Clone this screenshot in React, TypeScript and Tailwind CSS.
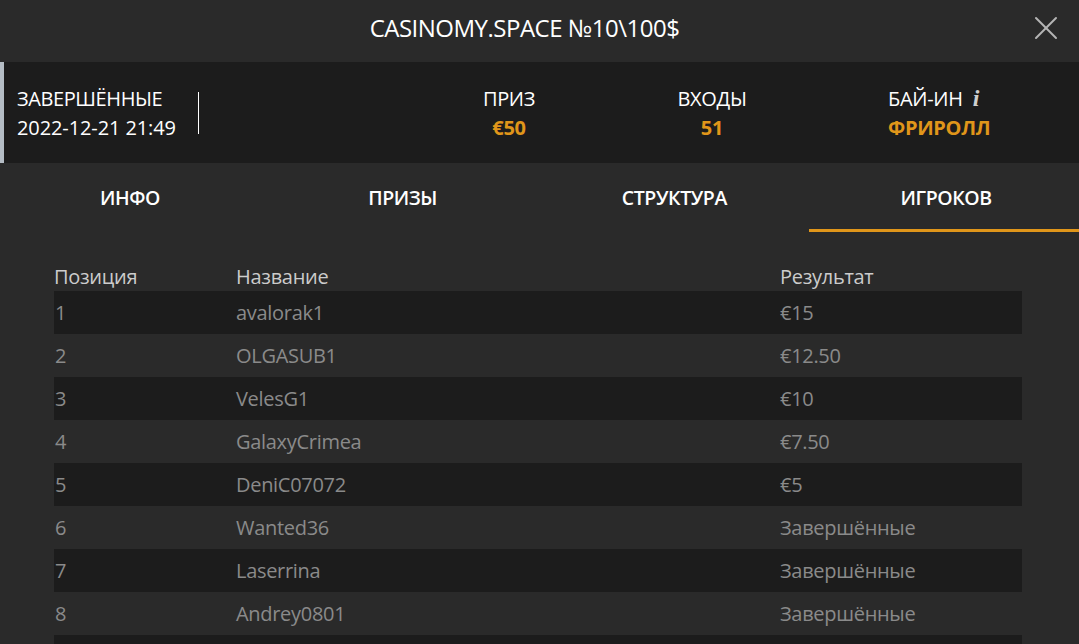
import { X } from "lucide-react";

const tabs = ["ИНФО", "ПРИЗЫ", "СТРУКТУРА", "ИГРОКОВ"];

const players = [
  { pos: 1, name: "avalorak1", result: "€15" },
  { pos: 2, name: "OLGASUB1", result: "€12.50" },
  { pos: 3, name: "VelesG1", result: "€10" },
  { pos: 4, name: "GalaxyCrimea", result: "€7.50" },
  { pos: 5, name: "DeniC07072", result: "€5" },
  { pos: 6, name: "Wanted36", result: "Завершённые" },
  { pos: 7, name: "Laserrina", result: "Завершённые" },
  { pos: 8, name: "Andrey0801", result: "Завершённые" },
  { pos: 9, name: "", result: "" },
];

export default function App() {
  return (
    <div
      className="h-[644px] w-[1079px] overflow-hidden bg-[#2a2a2a] text-white"
      style={{ fontFamily: '"Open Sans", "Noto Sans", sans-serif' }}
    >
      {/* title bar */}
      <div className="relative flex h-[62px] items-center justify-center pb-[6px] pr-[30px]">
        <h1 className="text-[24px] tracking-[-0.5px]">CASINOMY.SPACE №10\100$</h1>
        <button className="absolute right-[13px] top-[8px] text-[#b5b5b5]">
          <X className="h-[40px] w-[40px]" strokeWidth={1.2} />
        </button>
      </div>

      {/* summary */}
      <div className="flex h-[101px] items-center border-l-4 border-[#b4bcc4] bg-[#1c1c1c]">
        <div className="w-[194px] pl-[13px] text-[20px] leading-[29px] tracking-[-0.4px]">
          <div>ЗАВЕРШЁННЫЕ</div>
          <div className="tracking-[-0.1px]">2022-12-21 21:49</div>
        </div>
        <div className="h-[42px] w-px bg-white" />
        <div className="flex text-[20px] leading-[29px] tracking-[-0.3px]">
          <div className="ml-[210px] w-[200px] text-center">
            <div>ПРИЗ</div>
            <div className="font-bold text-[#e0961a]">€50</div>
          </div>
          <div className="ml-[3px] w-[200px] text-center">
            <div>ВХОДЫ</div>
            <div className="font-bold text-[#e0961a]">51</div>
          </div>
          <div className="ml-[76px]">
            <div className="flex items-center gap-[10px]">
              БАЙ-ИН
              <span
                className="text-[24px] font-bold italic leading-none text-[#cfcfcf]"
                style={{ fontFamily: '"Liberation Serif", serif' }}
              >
                i
              </span>
            </div>
            <div className="font-bold text-[#e0961a]">ФРИРОЛЛ</div>
          </div>
        </div>
      </div>

      {/* tabs */}
      <div className="grid h-[69px] grid-cols-4">
        {tabs.map((t, i) => (
          <div
            key={t}
            className={`flex items-center justify-center text-[19.5px] font-semibold tracking-[-0.4px] ${
              i === 3 ? "border-b-[3px] border-[#e0961a] pt-[3px]" : ""
            }`}
          >
            <span className={i === 0 ? "pr-[10px]" : i === 1 ? "pr-[4px]" : i === 3 ? "pl-[4px]" : ""}>{t}</span>
          </div>
        ))}
      </div>

      {/* players table */}
      <div className="px-[54px] pt-[31px]">
        <div className="mr-[3px]">
          <div className="flex h-[28px] items-center text-[20px] tracking-[-0.3px] text-[#cccccc]">
            <div className="w-[182px]">Позиция</div>
            <div className="w-[544px]">Название</div>
            <div>Результат</div>
          </div>
          {players.map((p, i) => (
            <div
              key={p.pos}
              className={`flex h-[43px] items-center text-[20px] tracking-[-0.3px] text-[#8a8a8a] ${
                i % 2 === 0 ? "bg-[#1c1c1c]" : ""
              }`}
            >
              <div className="w-[182px] pl-[1px]">{p.name ? p.pos : ""}</div>
              <div className="w-[544px]">{p.name}</div>
              <div>{p.result}</div>
            </div>
          ))}
        </div>
      </div>
    </div>
  );
}
